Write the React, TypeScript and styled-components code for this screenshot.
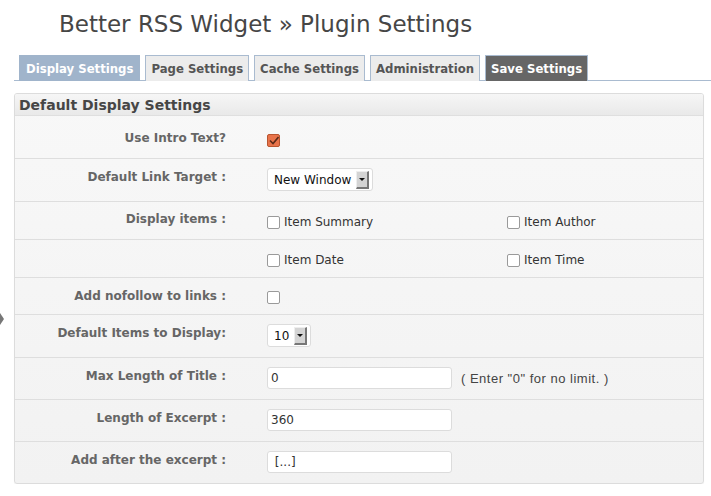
import styled, { createGlobalStyle } from "styled-components";

const Global = createGlobalStyle`
  body {
    margin: 0;
    background: #fff;
    font-family: "DejaVu Sans", sans-serif;
    color: #333;
  }
`;

const Page = styled.div`
  position: relative;
  padding: 0 9px 0 14px;
`;

const MenuArrow = styled.div`
  position: absolute;
  left: 0;
  top: 313px;
  width: 0;
  height: 0;
  border-top: 6px solid transparent;
  border-bottom: 6px solid transparent;
  border-left: 4px solid #777;
`;

const Title = styled.h2`
  margin: 0 0 0 45px;
  padding-top: 9px;
  font-size: 23px;
  line-height: 30px;
  font-weight: 400;
  color: #464646;
`;

const TabBar = styled.div`
  display: flex;
  gap: 5px;
  margin: 16px -9px 0 0;
  padding-left: 5px;
  border-bottom: 1px solid #a9bbd0;
`;

const Tab = styled.div<{ $kind?: "active" | "save" }>`
  height: 25px;
  padding: 0 ${(p) => (p.$kind === "active" ? 6 : 5)}px;
  display: flex;
  align-items: center;
  font-size: 11.7px;
  font-weight: 700;
  border: 1px solid #a9bbd0;
  border-bottom: none;
  margin-bottom: -1px;
  background: ${(p) =>
    p.$kind === "active" ? "#a0b4cb" : p.$kind === "save" ? "#666" : "#ececec"};
  border-color: ${(p) => (p.$kind === "active" ? "#a0b4cb" : "#a9bbd0")};
  color: ${(p) => (p.$kind ? "#fff" : "#555")};
`;

const Panel = styled.div`
  margin-top: 12px;
  width: 688px;
  border: 1px solid #dcdcdc;
  border-radius: 3px;
  box-shadow: 0 1px 1px rgba(0, 0, 0, 0.06);
  background: linear-gradient(#f8f8f8, #f2f2f2);
  overflow: hidden;
`;

const PanelHead = styled.div`
  height: 21px;
  padding-left: 4px;
  display: flex;
  align-items: center;
  font-size: 14px;
  font-weight: 700;
  color: #464646;
  background: linear-gradient(#f6f6f6, #e9e9e9);
  border-bottom: 1px solid #dfdfdf;
`;

const Row = styled.div<{ $h: number }>`
  display: grid;
  grid-template-columns: 211px 1fr;
  column-gap: 41px;
  align-items: start;
  height: ${(p) => p.$h}px;
  border-top: 1px solid #dedede;
  box-sizing: border-box;
  &:first-of-type {
    border-top: none;
  }
`;

const Label = styled.div<{ $top?: number }>`
  text-align: right;
  padding-top: ${(p) => p.$top ?? 11}px;
  font-size: 12px;
  line-height: 14px;
  font-weight: 700;
  color: #666;
  white-space: nowrap;
`;

const Cell = styled.div<{ $top?: number }>`
  padding-top: ${(p) => p.$top ?? 9}px;
  display: flex;
  align-items: center;
  gap: 9px;
`;

const Pair = styled.div`
  display: grid;
  grid-template-columns: 240px 1fr;
`;

const Check = styled.label`
  display: flex;
  align-items: center;
  gap: 4px;
  font-size: 12px;
  line-height: 14px;
  color: #333;
`;

const Box = styled.span<{ $on?: boolean }>`
  width: 11px;
  height: 11px;
  border: 1px solid ${(p) => (p.$on ? "#b8552f" : "#9a9a9a")};
  border-radius: 2px;
  background: ${(p) => (p.$on ? "#e8734a" : "#fff")};
  display: inline-flex;
  align-items: center;
  justify-content: center;
`;

const Select = styled.div`
  display: inline-flex;
  align-items: center;
  gap: 5px;
  height: 21px;
  padding: 0 3px 0 6px;
  background: #fff;
  border: 1px solid #dcdcdc;
  border-radius: 3px;
  font-size: 12px;
  color: #111;
`;

const SelectBtn = styled.span`
  width: 10px;
  height: 15px;
  background: #d4d4d4;
  border-right: 2px solid #777;
  border-bottom: 2px solid #777;
  border-top: 1px solid #eee;
  border-left: 1px solid #eee;
  display: flex;
  align-items: center;
  justify-content: center;
  &::after {
    content: "";
    border-left: 3px solid transparent;
    border-right: 3px solid transparent;
    border-top: 3px solid #111;
  }
`;

const Input = styled.div`
  width: 177px;
  height: 20px;
  padding: 0 3px;
  background: #fff;
  border: 1px solid #dcdcdc;
  border-radius: 3px;
  display: flex;
  align-items: center;
  font-size: 12px;
  color: #333;
`;

const Hint = styled.span`
  font-family: "Liberation Sans", Arial, sans-serif;
  font-size: 13px;
  letter-spacing: 0.5px;
  color: #444;
`;

const Tick = () => (
  <svg width="10" height="9" viewBox="0 0 10 9">
    <path d="M1 4.5 L4 7.5 L9.5 1" fill="none" stroke="#5a2a18" strokeWidth="1.6" />
  </svg>
);

const CheckItem = ({ text }: { text: string }) => (
  <Check>
    <Box />
    {text}
  </Check>
);

export default function App() {
  return (
    <Page>
      <Global />
      <MenuArrow />
      <Title>Better RSS Widget » Plugin Settings</Title>
      <TabBar>
        <Tab $kind="active">Display Settings</Tab>
        <Tab>Page Settings</Tab>
        <Tab>Cache Settings</Tab>
        <Tab>Administration</Tab>
        <Tab $kind="save">Save Settings</Tab>
      </TabBar>
      <Panel>
        <PanelHead>Default Display Settings</PanelHead>
        <div>
          <Row $h={42}>
            <Label $top={15}>Use Intro Text?</Label>
            <Cell $top={18}>
              <Box $on>
                <Tick />
              </Box>
            </Cell>
          </Row>
          <Row $h={43}>
            <Label>Default Link Target :</Label>
            <Cell>
              <Select>
                New Window
                <SelectBtn />
              </Select>
            </Cell>
          </Row>
          <Row $h={38}>
            <Label $top={10}>Display items :</Label>
            <Cell $top={13}>
              <Pair>
                <CheckItem text="Item Summary" />
                <CheckItem text="Item Author" />
              </Pair>
            </Cell>
          </Row>
          <Row $h={38}>
            <Label />
            <Cell $top={13}>
              <Pair>
                <CheckItem text="Item Date" />
                <CheckItem text="Item Time" />
              </Pair>
            </Cell>
          </Row>
          <Row $h={37}>
            <Label>Add nofollow to links :</Label>
            <Cell $top={13}>
              <Box />
            </Cell>
          </Row>
          <Row $h={43}>
            <Label>Default Items to Display:</Label>
            <Cell>
              <Select>
                10
                <SelectBtn />
              </Select>
            </Cell>
          </Row>
          <Row $h={42}>
            <Label>Max Length of Title :</Label>
            <Cell>
              <Input>0</Input>
              <Hint>( Enter "0" for no limit. )</Hint>
            </Cell>
          </Row>
          <Row $h={42}>
            <Label>Length of Excerpt :</Label>
            <Cell>
              <Input>360</Input>
            </Cell>
          </Row>
          <Row $h={42}>
            <Label>Add after the excerpt :</Label>
            <Cell>
              <Input>&nbsp;[...]</Input>
            </Cell>
          </Row>
        </div>
      </Panel>
    </Page>
  );
}
